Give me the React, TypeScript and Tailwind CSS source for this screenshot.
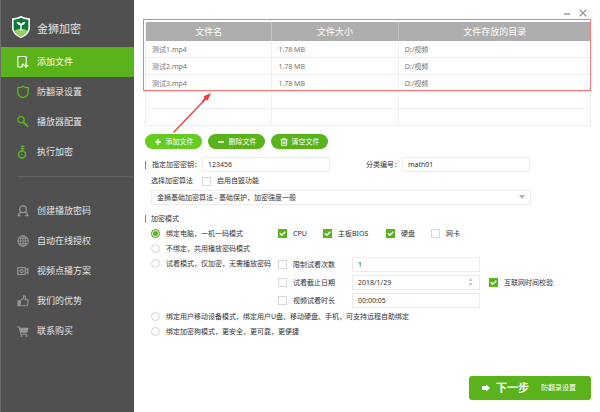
import { useState } from "react";
import type { ReactNode } from "react";

const files = [
  { name: "测试1.mp4", size: "1.78 MB", dir: "D:/视频" },
  { name: "测试2.mp4", size: "1.78 MB", dir: "D:/视频" },
  { name: "测试3.mp4", size: "1.78 MB", dir: "D:/视频" },
  { name: "", size: "", dir: "" },
  { name: "", size: "", dir: "" },
];

function Icon({ children }: { children: ReactNode }) {
  return (
    <svg
      viewBox="0 0 12 14"
      className="h-3.5 w-3 shrink-0"
      fill="none"
      stroke="currentColor"
      strokeWidth="1.1"
      aria-hidden="true"
    >
      {children}
    </svg>
  );
}

const steps = [
  {
    label: "添加文件",
    icon: (
      <Icon>
        <path d="M5.5 12H1.6a.8.8 0 0 1-.8-.8V2.3a.8.8 0 0 1 .8-.8h6.8a.8.8 0 0 1 .8.8v6.2M5.2 12V9.2h2" />
        <path d="M6.6 10.6h4.8M9 8.2v4.8" strokeWidth="1.3" />
      </Icon>
    ),
  },
  {
    label: "防翻录设置",
    icon: (
      <Icon>
        <path
          d="M6 1.2C4.8 2.2 3 2.6.9 2.6v4.8c0 2.7 2.3 4.4 5.1 5.3 2.8-.9 5.1-2.6 5.1-5.3V2.6C9 2.6 7.2 2.2 6 1.2z"
          strokeWidth="1.3"
        />
      </Icon>
    ),
  },
  {
    label: "播放器配置",
    icon: (
      <Icon>
        <circle cx="4" cy="4.8" r="3.1" strokeWidth="1.3" />
        <path d="M6.3 7.2l4.9 4.6" strokeWidth="1.8" />
      </Icon>
    ),
  },
  {
    label: "执行加密",
    icon: (
      <Icon>
        <circle cx="5" cy="9.5" r="3.5" strokeWidth="1.4" />
        <circle cx="5" cy="9.5" r=".8" fill="currentColor" stroke="none" />
        <path d="M5 6.5V.6M5 1.4h2.4M5 3.8h2.4" strokeWidth="1.4" />
      </Icon>
    ),
  },
];

const links = [
  {
    label: "创建播放密码",
    icon: (
      <Icon>
        <circle cx="6" cy="5.3" r="3.4" strokeWidth="1.3" />
        <path
          d="M4.2 8.2C2.5 8.9 1.5 9.900 1.100 11.600h2.700M7.800 8.200c1.700.7 2.700 1.700 3.100 3.400H8.200"
          strokeWidth="1.3"
        />
      </Icon>
    ),
  },
  {
    label: "自动在线授权",
    icon: (
      <Icon>
        <circle cx="6" cy="7" r="5.2" strokeWidth="1.1" />
        <ellipse cx="6" cy="7" rx="2.5" ry="5.2" strokeWidth=".9" />
        <path d="M6 1.8v10.4M.8 7h10.4M1.6 4.3h8.8M1.6 9.7h8.8" strokeWidth=".9" />
      </Icon>
    ),
  },
  {
    label: "视频点播方案",
    icon: (
      <Icon>
        <path d="M.8 3.5h7.4v7H.8z" />
        <circle cx="4.5" cy="7" r="1.6" />
        <path d="M8.4 6.3l2.5-2v5.4l-2.5-2" />
      </Icon>
    ),
  },
  {
    label: "我们的优势",
    icon: (
      <Icon>
        <path d="M.5 6.2h3.4v6H.5z" fill="currentColor" stroke="none" />
        <path d="M4.3 6.2L6.6 4V1.9c1.6-.4 2.300.9 1.500 3.800h2.700c.6 2.400.3 4.400-.6 6H4.300" />
      </Icon>
    ),
  },
  {
    label: "联系购买",
    icon: (
      <Icon>
        <path d="M.2 2.7h1.900l1.700 7.600h6.400" />
        <path d="M2.3 3.8h9.300l-1.300 5H3.500z" fill="currentColor" stroke="none" />
        <circle cx="4.5" cy="11.9" r="1" fill="currentColor" stroke="none" />
        <circle cx="9.5" cy="11.9" r="1" fill="currentColor" stroke="none" />
      </Icon>
    ),
  },
];

function Check({ label, on = false }: { label: string; on?: boolean }) {
  return (
    <label className="flex items-center gap-1.5 whitespace-nowrap">
      <span className="relative h-[9px] w-[9px] shrink-0">
        <input
          type="checkbox"
          defaultChecked={on}
          className="peer block h-[9px] w-[9px] appearance-none border border-[#d8d8d8] bg-white checked:border-[#5ab31a] checked:bg-[#5ab31a]"
        />
        <svg
          viewBox="0 0 9 9"
          className="pointer-events-none absolute inset-0 hidden h-[9px] w-[9px] peer-checked:block"
          fill="none"
          stroke="white"
          strokeWidth="1.4"
          aria-hidden="true"
        >
          <path d="M1.8 4.3l2 2 3.500-3.500" />
        </svg>
      </span>
      {label}
    </label>
  );
}

function Mode({ label, on = false }: { label: string; on?: boolean }) {
  return (
    <label className="flex h-[15px] items-center gap-1.5 whitespace-nowrap">
      <input
        type="radio"
        name="mode"
        defaultChecked={on}
        className="h-[9px] w-[9px] shrink-0 appearance-none rounded-full border border-[#d4d4d4] bg-white checked:border-[#5ab31a] checked:bg-[#5ab31a] checked:shadow-[inset_0_0_0_1px_white]"
      />
      {label}
    </label>
  );
}

const field =
  "h-[15px] w-32 border border-[#ececec] bg-white px-[5px] text-[7px] leading-3 text-[#333] outline-none";
const pill =
  "flex h-[15px] w-[57px] items-center justify-center gap-1 rounded-full text-[7px] leading-3 text-white";
const cell = "h-[17px] border-r border-b border-[#efefef] p-0 pt-0.5 pl-1.5";

export default function App() {
  const [active, setActive] = useState("添加文件");

  return (
    <div className="flex min-h-screen bg-white font-['Noto_Sans','Noto_Sans_CJK_SC',sans-serif] text-[7px] leading-3 text-[#333]">
      <aside className="w-[134px] shrink-0 border-l border-[#6c6c6c] bg-[#505050] text-[#e4e4e4]">
        <header className="flex h-[47px] items-center gap-1.5 pt-1.5 pl-2.5">
          <svg viewBox="0 0 20 24" className="h-6 w-5" aria-hidden="true">
            <path
              d="M10 .8C7.8 2.500 4.500 3.200 1 3.200v9.300c0 5 4 8.500 9 10.700 5-2.200 9-5.700 9-10.700V3.200c-3.500 0-6.800-.7-9-2.400z"
              fill="#fff"
            />
            <path
              d="M10 2.600C7.900 4 5.300 4.700 2.600 4.800v7.700c0 4 3.200 7 7.400 8.900 4.200-1.900 7.400-4.900 7.400-8.900V4.800C14.700 4.700 12.100 4 10 2.600z"
              fill="#0b7a3c"
            />
            <path d="M3.400 15.800c3.600-2.700 9.600-2.700 13.200 0-1.300 2.400-3.700 4.300-6.600 5.600-2.900-1.300-5.300-3.200-6.600-5.600z" fill="#9bd05c" />
            <path
              d="M9.300 15.500V10.300C7.300 10 6 8.900 5.700 6.900c2 0 3.600.5 4.300 2 .7-1.500 2.300-2 4.300-2-.3 2-1.600 3.100-3.600 3.400v5.200z"
              fill="#fff"
            />
          </svg>
          <h1 className="pt-1 text-[11px] leading-4">金狮加密</h1>
        </header>
        <nav className="text-[9px]">
          {steps.map((s) => (
            <button
              key={s.label}
              type="button"
              onClick={() => setActive(s.label)}
              className={
                active === s.label
                  ? "flex h-[30px] w-full items-center gap-2 bg-[#5ab31a] pl-4 text-white"
                  : "flex h-[30px] w-full items-center gap-2 pl-4"
              }
            >
              <span className={active === s.label ? "text-white" : "text-[#5cb81c]"}>{s.icon}</span>
              {s.label}
            </button>
          ))}
          <hr className="mt-[9px] mb-[19px] ml-4 border-[#626262]" />
          {links.map((l) => (
            <a key={l.label} href="#" className="flex h-[30px] items-center gap-2 pl-4">
              <span className="text-[#959595]">{l.icon}</span>
              {l.label}
            </a>
          ))}
        </nav>
      </aside>

      <main className="flex min-w-0 flex-1 flex-col pr-[9px] pb-3 pl-[11px]">
        <div className="flex h-[22px] items-center justify-end gap-2 pt-1 pr-1 text-[#999]">
          <button type="button" aria-label="最小化">
            <svg viewBox="0 0 8 8" className="h-2 w-2" stroke="currentColor" strokeWidth="1.5">
              <path d="M1 5h6" />
            </svg>
          </button>
          <button type="button" aria-label="关闭">
            <svg viewBox="0 0 8 8" className="h-2 w-2" stroke="currentColor" strokeWidth="1.3">
              <path d="M.8.8l6.400 6.400M7.200.8L.8 7.200" />
            </svg>
          </button>
        </div>

        <div className="relative">
          <table className="w-full table-fixed border-separate border-spacing-0 border-l border-[#efefef] text-left text-[#777]">
            <colgroup>
              <col className="w-[28.4%]" />
              <col className="w-[28.4%]" />
              <col />
            </colgroup>
            <thead>
              <tr className="bg-[#aeaeae] text-center text-[9px] text-white">
                <th className="h-[19px] border-r border-[#c4c4c4] p-0 font-normal">文件名</th>
                <th className="border-r border-[#c4c4c4] p-0 font-normal">文件大小</th>
                <th className="p-0 font-normal">文件存放的目录</th>
              </tr>
            </thead>
            <tbody>
              {files.map((f, i) => (
                <tr key={i}>
                  <td className={cell}>{f.name}</td>
                  <td className={cell}>{f.size}</td>
                  <td className={cell}>{f.dir}</td>
                </tr>
              ))}
            </tbody>
          </table>
          <div className="pointer-events-none absolute -top-[3px] right-0 -left-[2px] h-[72px] border border-[#ff7474]" />
          <svg
            viewBox="0 0 42 44"
            className="pointer-events-none absolute top-[68px] left-[27px] h-11 w-[42px]"
            aria-hidden="true"
          >
            <path d="M1.5 42.5L34 8.500" stroke="#f23b3b" strokeWidth="1.3" />
            <path d="M39 3l-7.500 3.200 1 1.500-3.700 5.500 5.400-3.700 1.500 1z" fill="#f23b3b" />
          </svg>
        </div>

        <div className="mt-2 flex gap-1.5">
          <button type="button" className={`${pill} bg-[#66cc22]`}>
            <svg viewBox="0 0 8 8" className="h-2 w-2" stroke="currentColor" strokeWidth="1.4">
              <path d="M1 4h6M4 1v6" />
            </svg>
            添加文件
          </button>
          <button type="button" className={`${pill} bg-[#5ab31a]`}>
            <svg viewBox="0 0 8 8" className="h-2 w-2" stroke="currentColor" strokeWidth="1.4">
              <path d="M1 4h6" />
            </svg>
            删除文件
          </button>
          <button type="button" className={`${pill} bg-[#5ab31a]`}>
            <svg viewBox="0 0 8 8" className="h-2 w-2" fill="none" stroke="currentColor">
              <path d="M.5 1.8h7M2.800 1.500V.6h2.400v.9M1.500 2v5.300h5V2M3.200 3.400v2.600M4.800 3.400v2.600" />
            </svg>
            清空文件
          </button>
        </div>

        <form className="mt-2" onSubmit={(e) => e.preventDefault()}>
          <div className="flex items-center">
            <span className="h-2 w-px bg-[#5ab31a]" />
            <label htmlFor="key" className="w-[51px] pl-1.5 whitespace-nowrap">
              指定加密密钥：
            </label>
            <input id="key" defaultValue="123456" className={`${field} ml-[5px]`} />
            <label htmlFor="category" className="ml-9 w-9 whitespace-nowrap">
              分类编号：
            </label>
            <input id="category" defaultValue="math01" className={field} />
          </div>
          <div className="flex h-[18px] items-center gap-[7px] pl-1.5">
            <label htmlFor="algorithm" className="w-11 whitespace-nowrap">
              选择加密算法
            </label>
            <Check label="启用自毁功能" />
          </div>
          <div className="relative ml-1.5 w-[380px]">
            <select
              id="algorithm"
              className="block h-[15px] w-full appearance-none border border-[#ececec] bg-white px-[5px] text-[7px] leading-3 outline-none"
            >
              <option>金狮基础加密算法 - 基础保护，加密强度一般</option>
            </select>
            <svg
              viewBox="0 0 6 4"
              className="pointer-events-none absolute top-[5px] right-1.5 h-1 w-1.5"
              fill="#b4b4b4"
              aria-hidden="true"
            >
              <path d="M0 0h6L3 4z" />
            </svg>
          </div>

          <fieldset className="mt-1.5">
            <legend className="float-left flex h-[15px] w-full items-center gap-[5px]">
              <span className="h-2 w-px bg-[#5ab31a]" />
              加密模式
            </legend>
            <div className="clear-both pl-1.5">
              <div className="flex">
                <div className="w-[127px]">
                  <Mode label="绑定电脑，一机一码模式" on />
                </div>
                <div className="flex items-center">
                  <div className="w-[45px]">
                    <Check label="CPU" on />
                  </div>
                  <div className="w-[63px]">
                    <Check label="主板BIOS" on />
                  </div>
                  <div className="w-[45px]">
                    <Check label="硬盘" on />
                  </div>
                  <Check label="网卡" />
                </div>
              </div>
              <Mode label="不绑定，共用播放密码模式" />
              <div className="flex">
                <div className="w-[127px]">
                  <Mode label="试看模式，仅加密，无需播放密码" />
                </div>
                <div className="grid grid-cols-[74px_128px_auto] items-center gap-y-[3px] py-px">
                  <Check label="限制试看次数" />
                  <input aria-label="限制试看次数" defaultValue="1" className={field} />
                  <span />
                  <Check label="试看截止日期" />
                  <div className="relative h-[15px]">
                    <input aria-label="试看截止日期" defaultValue="2018/1/29" className={`${field} block`} />
                    <svg
                      viewBox="0 0 5 8"
                      className="absolute top-[3px] right-[7px] h-2 w-[5px]"
                      fill="#b4b4b4"
                      aria-hidden="true"
                    >
                      <path d="M.5 2.800h4L2.500.5zM.5 5.200h4L2.500 7.500z" />
                    </svg>
                  </div>
                  <div className="pl-[9px]">
                    <Check label="互联网时间校验" on />
                  </div>
                  <Check label="视频试看时长" />
                  <input aria-label="视频试看时长" defaultValue="00:00:05" className={field} />
                </div>
              </div>
              <Mode label="绑定用户移动设备模式，绑定用户U盘、移动硬盘、手机，可支持远程自助绑定" />
              <Mode label="绑定加密狗模式，更安全，更可靠，更便捷" />
            </div>
          </fieldset>
        </form>

        <footer className="mt-auto flex justify-end">
          <button
            type="button"
            className="flex h-6 w-[122px] items-center rounded-[3px] bg-[#5ab31a] pl-[13px] text-white"
          >
            <svg viewBox="0 0 8 8" className="h-2 w-2" fill="currentColor" aria-hidden="true">
              <path d="M0 2h4V.4L8 4 4 7.600V6H0z" />
            </svg>
            <strong className="ml-1.5 text-[11px] leading-4">下一步</strong>
            <span className="ml-3">防翻录设置</span>
          </button>
        </footer>
      </main>
    </div>
  );
}
